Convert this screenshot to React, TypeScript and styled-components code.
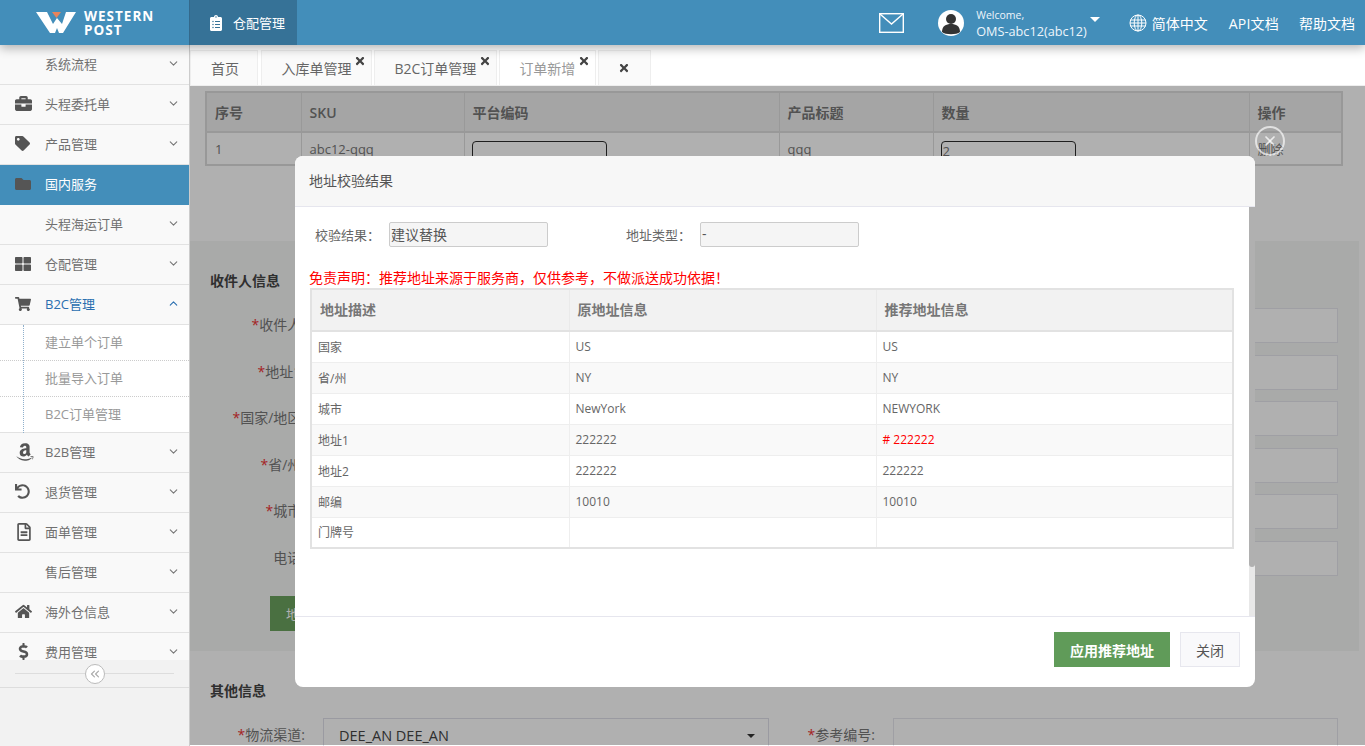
import React from 'react';
import styled, { createGlobalStyle } from 'styled-components';
import { ChevronDown, ChevronUp, ChevronsLeft, X } from 'lucide-react';
import {
  FaAmazon,
  FaBriefcase,
  FaClipboardList,
  FaDollarSign,
  FaFolder,
  FaHome,
  FaRegFileAlt,
  FaShoppingCart,
  FaTag,
  FaThLarge,
  FaTimes,
  FaUndo,
} from 'react-icons/fa';

const GlobalStyle = createGlobalStyle`
  html, body {
    margin: 0;
    height: 100%;
    overflow: hidden;
    font-family: "Open Sans", "Noto Sans CJK SC", sans-serif;
    font-size: 13px;
    color: #666;
    background: #fff;
  }
  * { box-sizing: border-box; }
`;

const menu = [
  { label: '系统流程' },
  { label: '头程委托单', icon: <FaBriefcase size={17} /> },
  { label: '产品管理', icon: <FaTag size={15} /> },
  { label: '国内服务', icon: <FaFolder size={16} />, active: true },
  { label: '头程海运订单' },
  { label: '仓配管理', icon: <FaThLarge size={16} /> },
  { label: 'B2C管理', icon: <FaShoppingCart size={16} />, open: true, subs: ['建立单个订单', '批量导入订单', 'B2C订单管理'] },
  { label: 'B2B管理', icon: <FaAmazon size={20} /> },
  { label: '退货管理', icon: <FaUndo size={15} /> },
  { label: '面单管理', icon: <FaRegFileAlt size={18} /> },
  { label: '售后管理' },
  { label: '海外仓信息', icon: <FaHome size={17} /> },
  { label: '费用管理', icon: <FaDollarSign size={17} /> },
];

const tabs = [
  { label: '首页' },
  { label: '入库单管理', closable: true },
  { label: 'B2C订单管理', closable: true },
  { label: '订单新增', closable: true, active: true },
];

const addressRows = [
  ['国家', 'US', 'US'],
  ['省/州', 'NY', 'NY'],
  ['城市', 'NewYork', 'NEWYORK'],
  ['地址1', '222222', '# 222222'],
  ['地址2', '222222', '222222'],
  ['邮编', '10010', '10010'],
  ['门牌号', '', ''],
];

const receiverLabels = [
  { text: '收件人:', required: true },
  { text: '地址1:', required: true },
  { text: '国家/地区:', required: true },
  { text: '省/州:', required: true },
  { text: '城市:', required: true },
  { text: '电话:' },
];

function MenuChevron({ active, open }: { active?: boolean; open?: boolean }) {
  if (active) return null;
  return open ? <ChevronUp size={13} /> : <ChevronDown size={13} />;
}

export default function App() {
  return (
    <>
      <GlobalStyle />
      <Style.Page>
        <Style.Header>
          <Style.Brand>
            <svg width="40" height="22" viewBox="0 0 40 22">
              <path d="M0 0H11L17 12L21 6L26 12L30 0H40L27 21H23L21 16L19 21H14Z" fill="#fff" />
              <path d="M16 0H25L20.5 6Z" fill="#e8845c" />
            </svg>
            <Style.BrandText>
              <Style.BrandLine>WESTERN</Style.BrandLine>
              <Style.BrandLine>POST</Style.BrandLine>
            </Style.BrandText>
          </Style.Brand>
          <Style.Module>
            <FaClipboardList size={16} />
            仓配管理
          </Style.Module>
          <Style.HeaderRight>
            <svg width="25" height="20" viewBox="0 0 25 20" fill="none" stroke="#fff" strokeWidth="1.4">
              <rect x="0.7" y="0.7" width="23.6" height="18.6" />
              <path d="M1 1L12.5 11L24 1" />
            </svg>
            <Style.User>
              <svg width="26" height="26" viewBox="0 0 26 26">
                <circle cx="13" cy="13" r="13" fill="#fff" />
                <circle cx="13" cy="9" r="5" fill="#333" />
                <path d="M4 22C4 16 8 14 13 14C18 14 22 16 22 22C19 25 7 25 4 22Z" fill="#333" />
              </svg>
              <Style.UserText>
                <Style.Welcome>Welcome,</Style.Welcome>
                <span>OMS-abc12(abc12)</span>
              </Style.UserText>
              <Style.Caret />
            </Style.User>
            <Style.Language>
              <svg width="18" height="18" viewBox="0 0 18 18" fill="none" stroke="#fff" strokeWidth="1">
                <circle cx="9" cy="9" r="8" />
                <ellipse cx="9" cy="9" rx="3.8" ry="8" />
                <path d="M9 1V17M1.5 6H16.5M1 9H17M1.5 12H16.5" />
              </svg>
              简体中文
            </Style.Language>
            <Style.ApiLink>API文档</Style.ApiLink>
            <Style.HeaderLink>帮助文档</Style.HeaderLink>
          </Style.HeaderRight>
        </Style.Header>

        <Style.Body>
          <Style.Sidebar>
            <Style.Menu>
              {menu.map(item => (
                <div key={item.label}>
                  <Style.MenuRow $active={item.active} $open={item.open}>
                    <Style.MenuIcon>{item.icon}</Style.MenuIcon>
                    <Style.MenuLabel>{item.label}</Style.MenuLabel>
                    <MenuChevron active={item.active} open={item.open} />
                  </Style.MenuRow>
                  {item.subs && (
                    <Style.SubList>
                      {item.subs.map(sub => (
                        <Style.SubRow key={sub}>{sub}</Style.SubRow>
                      ))}
                    </Style.SubList>
                  )}
                </div>
              ))}
            </Style.Menu>
            <Style.Collapse>
              <Style.CollapseLine />
              <Style.CollapseButton>
                <ChevronsLeft size={14} />
              </Style.CollapseButton>
              <Style.CollapseLine />
            </Style.Collapse>
          </Style.Sidebar>

          <Style.Main>
            <Style.TabBar>
              {tabs.map(tab => (
                <Style.Tab key={tab.label} $active={tab.active}>
                  {tab.label}
                  {tab.closable && (
                    <Style.TabClose>
                      <FaTimes size={12} />
                    </Style.TabClose>
                  )}
                </Style.Tab>
              ))}
              <Style.CloseAllTab>
                <FaTimes size={12} />
              </Style.CloseAllTab>
            </Style.TabBar>

            <Style.Content>
              <Style.SkuTable>
                <colgroup>
                  <col style={{ width: 95 }} />
                  <col style={{ width: 163 }} />
                  <col style={{ width: 315 }} />
                  <col style={{ width: 154 }} />
                  <col style={{ width: 316 }} />
                  <col />
                </colgroup>
                <thead>
                  <tr>
                    <th>序号</th>
                    <th>SKU</th>
                    <th>平台编码</th>
                    <th>产品标题</th>
                    <th>数量</th>
                    <th>操作</th>
                  </tr>
                </thead>
                <tbody>
                  <tr>
                    <td>1</td>
                    <td>abc12-qqq</td>
                    <td>
                      <Style.CellInput />
                    </td>
                    <td>qqq</td>
                    <td>
                      <Style.CellInput>2</Style.CellInput>
                    </td>
                    <td>删除</td>
                  </tr>
                </tbody>
              </Style.SkuTable>

              <Style.Panel>
                <Style.SectionTitle>收件人信息</Style.SectionTitle>
                <Style.FormGrid>
                  {receiverLabels.map(label => (
                    <React.Fragment key={label.text}>
                      <Style.FieldLabel>
                        {label.required && <Style.Star>*</Style.Star>}
                        {label.text}
                      </Style.FieldLabel>
                      <Style.FieldInput />
                      <span />
                      <Style.FieldInput />
                    </React.Fragment>
                  ))}
                </Style.FormGrid>
                <Style.CheckButton>地址校验</Style.CheckButton>
              </Style.Panel>

              <Style.Other>
                <Style.SectionTitle>其他信息</Style.SectionTitle>
                <Style.FormGrid>
                  <Style.FieldLabel>
                    <Style.Star>*</Style.Star>物流渠道:
                  </Style.FieldLabel>
                  <Style.FieldSelect>
                    DEE_AN DEE_AN
                    <Style.SelectCaret />
                  </Style.FieldSelect>
                  <Style.FieldLabel>
                    <Style.Star>*</Style.Star>参考编号:
                  </Style.FieldLabel>
                  <Style.FieldInput />
                </Style.FormGrid>
              </Style.Other>
            </Style.Content>

            <Style.Overlay />
            <Style.ModalClose>
              <X size={16} strokeWidth={2.5} />
            </Style.ModalClose>

            <Style.Modal>
              <Style.ModalHeader>地址校验结果</Style.ModalHeader>
              <Style.ModalBody>
                <Style.ModalContent>
                  <Style.ResultRow>
                    <Style.ResultLabel>校验结果：</Style.ResultLabel>
                    <Style.ResultValue>建议替换</Style.ResultValue>
                    <Style.ResultLabel $second>地址类型：</Style.ResultLabel>
                    <Style.ResultValue>-</Style.ResultValue>
                  </Style.ResultRow>
                  <Style.Notice>免责声明：推荐地址来源于服务商，仅供参考，不做派送成功依据！</Style.Notice>
                  <Style.AddressTable>
                    <colgroup>
                      <col style={{ width: 258 }} />
                      <col style={{ width: 307 }} />
                      <col />
                    </colgroup>
                    <thead>
                      <tr>
                        <th>地址描述</th>
                        <th>原地址信息</th>
                        <th>推荐地址信息</th>
                      </tr>
                    </thead>
                    <tbody>
                      {addressRows.map(([name, origin, suggested]) => (
                        <tr key={name}>
                          <td>{name}</td>
                          <td>{origin}</td>
                          <Style.SuggestCell $changed={name === '地址1'}>{suggested}</Style.SuggestCell>
                        </tr>
                      ))}
                    </tbody>
                  </Style.AddressTable>
                </Style.ModalContent>
                <Style.ScrollTrack>
                  <Style.ScrollThumb />
                </Style.ScrollTrack>
              </Style.ModalBody>
              <Style.ModalFooter>
                <Style.ApplyButton>应用推荐地址</Style.ApplyButton>
                <Style.CloseButton>关闭</Style.CloseButton>
              </Style.ModalFooter>
            </Style.Modal>
          </Style.Main>
        </Style.Body>
      </Style.Page>
    </>
  );
}

const Style = {
  Page: styled.div`
    display: flex;
    flex-direction: column;
    height: 746px;
    overflow: hidden;
  `,
  Header: styled.header`
    position: relative;
    z-index: 3;
    display: flex;
    flex: none;
    height: 45px;
    background: #438eba;
    color: #fff;
    box-shadow: 0 3px 10px rgba(0, 0, 0, 0.3);
  `,
  Brand: styled.div`
    display: flex;
    align-items: center;
    gap: 8px;
    width: 190px;
    padding-left: 36px;
    border-right: 1px solid #34698b;
  `,
  BrandText: styled.div`
    font-family: "Open Sans", sans-serif;
    font-size: 13.5px;
    font-weight: 700;
    letter-spacing: 1px;
  `,
  BrandLine: styled.div`
    height: 14px;
    line-height: 14px;
  `,
  Module: styled.div`
    display: flex;
    align-items: center;
    gap: 9px;
    width: 107px;
    padding-left: 18px;
    background: #367297;
    font-size: 13px;
  `,
  HeaderRight: styled.div`
    display: flex;
    align-items: center;
    margin-left: auto;
    padding-right: 10px;
    font-size: 14px;
  `,
  User: styled.div`
    display: flex;
    align-items: center;
    margin-left: 34px;
  `,
  UserText: styled.div`
    display: flex;
    flex-direction: column;
    margin-left: 12px;
    font-size: 12.7px;
    line-height: 16px;
    color: #eef5fa;
  `,
  Welcome: styled.span`
    font-size: 10.5px;
  `,
  Caret: styled.i`
    width: 0;
    height: 0;
    margin: 0 0 6px 3px;
    border-left: 5px solid transparent;
    border-right: 5px solid transparent;
    border-top: 5px solid #fff;
  `,
  Language: styled.div`
    display: flex;
    align-items: center;
    gap: 5px;
    margin-left: 29px;
  `,
  HeaderLink: styled.div`
    margin-left: 20px;
  `,
  ApiLink: styled.div`
    margin-left: 21px;
    letter-spacing: 0.2px;
  `,
  Body: styled.div`
    display: flex;
    flex: 1;
    min-height: 0;
  `,
  Sidebar: styled.aside`
    flex: none;
    width: 190px;
    background: #f2f2f2;
    border-right: 1px solid #ccc;
  `,
  Menu: styled.nav`
    height: 615px;
    overflow: hidden;
    background: #f9f9f9;
  `,
  MenuRow: styled.div<{ $active?: boolean; $open?: boolean }>`
    display: flex;
    align-items: center;
    height: 40px;
    padding: 0 9px 2px 15px;
    border-bottom: 1px solid ${p => (p.$active ? '#438eba' : '#e2e2e2')};
    background: ${p => (p.$active ? '#438eba' : 'transparent')};
    color: ${p => (p.$active ? '#fff' : p.$open ? '#2a6fb0' : '#707070')};
    & > svg {
      color: ${p => (p.$open ? '#2a6fb0' : '#777')};
    }
  `,
  MenuIcon: styled.span`
    display: flex;
    align-items: center;
    width: 30px;
    color: #555;
  `,
  MenuLabel: styled.span`
    flex: 1;
  `,
  SubList: styled.div`
    position: relative;
    background: #fff;
    &::before {
      content: '';
      position: absolute;
      left: 23px;
      top: 0;
      bottom: 0;
      border-left: 1px dotted #8fb0cc;
    }
  `,
  SubRow: styled.div`
    display: flex;
    align-items: center;
    height: 36px;
    padding: 0 0 2px 45px;
    border-bottom: 1px dotted #ccc;
    color: #999;
    &:last-child {
      border-bottom: 1px solid #e2e2e2;
    }
  `,
  Collapse: styled.div`
    display: flex;
    align-items: center;
    height: 28px;
    padding: 0 15px;
    border-bottom: 1px solid #ddd;
  `,
  CollapseLine: styled.span`
    flex: 1;
    height: 1px;
    background: #ddd;
  `,
  CollapseButton: styled.span`
    display: flex;
    align-items: center;
    justify-content: center;
    width: 20px;
    height: 20px;
    border: 1px solid #bbb;
    border-radius: 50%;
    background: #fff;
    color: #aaa;
  `,
  Main: styled.main`
    position: relative;
    flex: 1;
    min-width: 0;
  `,
  TabBar: styled.div`
    display: flex;
    gap: 2px;
    height: 41px;
    padding-top: 5px;
    background: #fff;
    border-bottom: 1px solid #eee;
  `,
  Tab: styled.div<{ $active?: boolean }>`
    position: relative;
    display: flex;
    align-items: center;
    padding: 0 19.5px;
    border: 1px solid #eee;
    border-bottom: 0;
    background: ${p => (p.$active ? '#fff' : '#fafafa')};
    color: ${p => (p.$active ? '#999' : '#666')};
    font-size: 14px;
    &:first-child {
      margin-right: 1px;
      padding: 0 18px 0 20px;
    }
  `,
  TabClose: styled.span`
    position: absolute;
    top: 4px;
    right: 5px;
    color: #444;
    line-height: 0;
  `,
  CloseAllTab: styled.div`
    display: flex;
    align-items: center;
    justify-content: center;
    width: 53px;
    border: 1px solid #eee;
    border-bottom: 0;
    background: #fafafa;
    color: #444;
  `,
  Content: styled.div`
    padding-top: 5px;
    background: #fff;
  `,
  SkuTable: styled.table`
    table-layout: fixed;
    width: 1138px;
    margin-left: 15px;
    border-collapse: collapse;
    border: 2px solid #dcdcdc;
    th {
      height: 40px;
      padding: 0 8px;
      background: #f0f0f0;
      border: 1px solid #dedede;
      border-bottom-width: 2px;
      color: #777;
      font-size: 14px;
      font-weight: 600;
      text-align: left;
    }
    td {
      height: 33px;
      padding: 0 8px;
      border: 1px solid #dedede;
      color: #777;
      font-size: 13px;
    }
  `,
  CellInput: styled.div`
    width: 135px;
    height: 25px;
    margin: 5px 0 -5px -1px;
    padding-left: 1px;
    border: 1px solid #2c2c2c;
    border-radius: 4px;
    background: #fff;
  `,
  Panel: styled.section`
    height: 410px;
    margin: 75px 6px 0 0;
    padding-top: 30px;
    background: #f5f6f5;
  `,
  SectionTitle: styled.h3`
    margin: 0 0 17px 20px;
    color: #444;
    font-size: 14px;
    font-weight: 700;
    line-height: 20px;
  `,
  FormGrid: styled.div`
    display: grid;
    grid-template-columns: 116px 446px 90px 445px;
    column-gap: 17px;
    row-gap: 11.6px;
    align-items: center;
  `,
  FieldLabel: styled.label`
    padding: 0 1px 3px 0;
    color: #777;
    font-size: 14px;
    text-align: right;
    white-space: nowrap;
  `,
  Star: styled.span`
    color: #e33;
  `,
  FieldInput: styled.div`
    height: 35px;
    border: 1px solid #e6e6ee;
    background: #fff;
  `,
  FieldSelect: styled.div`
    position: relative;
    display: flex;
    align-items: center;
    height: 35px;
    padding-left: 15px;
    border: 1px solid #e0e0ea;
    background: #fff;
    color: #444;
    font-size: 14.5px;
  `,
  SelectCaret: styled.i`
    position: absolute;
    right: 13px;
    top: 15px;
    border-left: 4px solid transparent;
    border-right: 4px solid transparent;
    border-top: 4px solid #333;
  `,
  CheckButton: styled.button`
    display: block;
    height: 35px;
    margin: 20px 0 0 80px;
    padding: 0 16px;
    border: 0;
    background: #6ca25f;
    color: #fff;
    font: inherit;
    font-size: 13px;
  `,
  Other: styled.section`
    padding-top: 30px;
  `,
  Overlay: styled.div`
    position: absolute;
    inset: 41px 0 1px 0;
    background: rgba(0, 0, 0, 0.31);
  `,
  ModalClose: styled.div`
    position: absolute;
    left: 1065px;
    top: 81px;
    z-index: 2;
    display: flex;
    align-items: center;
    justify-content: center;
    width: 30px;
    height: 30px;
    border: 2px solid rgba(255, 255, 255, 0.65);
    border-radius: 50%;
    color: rgba(255, 255, 255, 0.75);
  `,
  Modal: styled.div`
    position: absolute;
    left: 105px;
    top: 111px;
    display: flex;
    flex-direction: column;
    width: 960px;
    height: 531px;
    overflow: hidden;
    border-radius: 8px;
    background: #fff;
  `,
  ModalHeader: styled.div`
    display: flex;
    align-items: center;
    flex: none;
    height: 51px;
    padding: 0 0 2px 14px;
    border-bottom: 1px solid #e6e6ee;
    background: #f7f7f7;
    color: #555;
    font-size: 14px;
  `,
  ModalBody: styled.div`
    display: flex;
    flex: 1;
    min-height: 0;
  `,
  ModalContent: styled.div`
    flex: 1;
    padding: 15px 0 0 14px;
  `,
  ScrollTrack: styled.div`
    flex: none;
    width: 6px;
    background: #e8e8e8;
  `,
  ScrollThumb: styled.div`
    height: 360px;
    border-radius: 0 0 3px 3px;
    background: #b0b0b0;
  `,
  ResultRow: styled.div`
    display: flex;
    align-items: center;
    height: 25px;
    padding-left: 6px;
  `,
  ResultLabel: styled.span<{ $second?: boolean }>`
    width: 74px;
    margin-left: ${p => (p.$second ? '78px' : '0')};
    color: #666;
    font-size: 13px;
  `,
  ResultValue: styled.div`
    display: flex;
    align-items: center;
    width: 159px;
    height: 25px;
    padding: 0 0 2px 1px;
    border: 1px solid #ccc;
    border-radius: 2px;
    background: #f5f5f5;
    color: #555;
    font-size: 14px;
  `,
  Notice: styled.div`
    margin-top: 21px;
    color: #f00;
    font-size: 14px;
    line-height: 20px;
  `,
  AddressTable: styled.table`
    table-layout: fixed;
    width: 924px;
    margin-left: 1px;
    border-collapse: collapse;
    border: 2px solid #e2e2e2;
    th {
      height: 42px;
      padding: 0 8px 3px;
      background: #f2f2f2;
      border: 1px solid #eaeaea;
      border-bottom: 2px solid #e2e2e2;
      color: #777;
      font-size: 14px;
      font-weight: 600;
      text-align: left;
    }
    td {
      height: 31px;
      padding: 0 6px;
      border: 1px solid #eee;
      color: #666;
      font-size: 12px;
    }
    tbody tr:nth-child(even) {
      background: #f9f9f9;
    }
  `,
  SuggestCell: styled.td<{ $changed?: boolean }>`
    && {
      color: ${p => (p.$changed ? '#f00' : '#666')};
    }
  `,
  ModalFooter: styled.div`
    display: flex;
    flex: none;
    justify-content: flex-end;
    gap: 10px;
    height: 71px;
    padding: 15px 15px 0 0;
    border-top: 1px solid #e6e6ee;
  `,
  ApplyButton: styled.button`
    width: 116px;
    height: 35px;
    border: 0;
    background: #609b59;
    color: #fff;
    font: inherit;
    font-size: 14px;
    font-weight: 600;
  `,
  CloseButton: styled.button`
    width: 60px;
    height: 35px;
    border: 1px solid #e7e7ee;
    background: #f9f9fb;
    color: #555;
    font: inherit;
    font-size: 14px;
  `,
};
